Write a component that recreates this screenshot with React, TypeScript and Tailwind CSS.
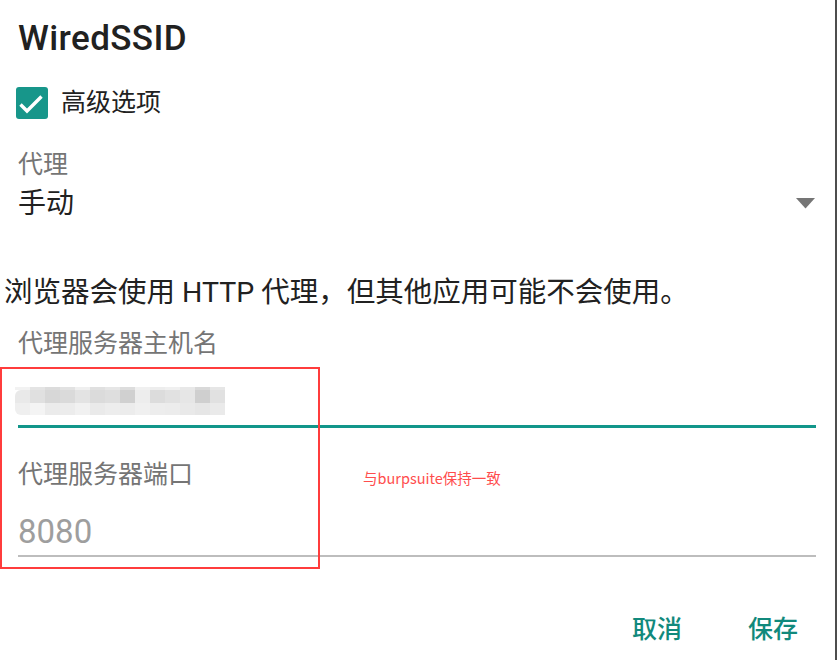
import React from "react";

const topRow = [
  "bg-[#f2f2f2]",
  "bg-[#e4e4e4]",
  "bg-[#dcdcdc]",
  "bg-[#e2e2e2]",
  "bg-[#efefef]",
  "bg-[#e0e0e0]",
  "bg-[#e6e6e6]",
  "bg-[#dddddd]",
  "bg-[#f0f0f0]",
  "bg-[#ededed]",
  "bg-[#f0f0f0]",
  "bg-[#e8e8e8]",
  "bg-[#d9d9d9]",
  "bg-[#e6e6e6]",
];
const row1 = [
  "bg-[#e9e9e9]",
  "bg-[#e0e0e0]",
  "bg-[#d7d7d7]",
  "bg-[#dadada]",
  "bg-[#e3e3e3]",
  "bg-[#dbdbdb]",
  "bg-[#dedede]",
  "bg-[#d0d0d0]",
  "bg-[#ededed]",
  "bg-[#dcdcdc]",
  "bg-[#e1e1e1]",
  "bg-[#e6e6e6]",
  "bg-[#cfcfcf]",
  "bg-[#e1e1e1]",
];
const row2 = [
  "bg-[#efefef]",
  "bg-[#f4f4f4]",
  "bg-[#ebebeb]",
  "bg-[#ececec]",
  "bg-[#f1f1f1]",
  "bg-[#eaeaea]",
  "bg-[#ededed]",
  "bg-[#ececec]",
  "bg-[#f0f0f0]",
  "bg-[#ededed]",
  "bg-[#ececec]",
  "bg-[#e9e9e9]",
  "bg-[#e6e6e6]",
  "bg-[#eaeaea]",
];

function Mosaic() {
  return (
    <div className="ml-[-3px] mt-[31px] flex flex-col">
      <div className="flex h-[3px]">
        {topRow.map((c, i) => (
          <div key={i} className={`w-[15px] ${c}`} />
        ))}
      </div>
      <div className="flex h-[13px]">
        {row1.map((c, i) => (
          <div key={i} className={`w-[15px] ${c} ${i === 0 ? "rounded-tl-[6px]" : ""}`} />
        ))}
      </div>
      <div className="flex h-[12px]">
        {row2.map((c, i) => (
          <div key={i} className={`w-[15px] ${c} ${i === 0 ? "rounded-bl-[6px]" : ""}`} />
        ))}
      </div>
    </div>
  );
}

export default function App() {
  return (
    <div className="relative flex h-[660px] w-[838px] overflow-hidden bg-white font-[Roboto,'Noto_Sans_CJK_SC',sans-serif]">
      <div className="flex w-[835px] flex-col pl-[18px] pr-[19px]">
        {/* Title */}
        <div className="pt-[21px] h-[57px] text-[35px] leading-[36px] font-medium tracking-[0.4px] text-[#212121]">
          WiredSSID
        </div>

        {/* Checkbox row */}
        <div className="mt-[30px] flex h-[32px] items-center">
          <div className="ml-[-2px] flex h-[32px] w-[32px] items-center justify-center rounded-[3px] bg-[#17968a]">
            <svg width="32" height="32" viewBox="0 0 32 32">
              <path
                d="M4.5 17.5 L11 24 L25.5 9.5"
                fill="none"
                stroke="white"
                strokeWidth="3.4"
              />
            </svg>
          </div>
          <span className="ml-[13px] text-[25px] leading-[32px] text-[#212121]">高级选项</span>
        </div>

        {/* Proxy label */}
        <div className="mt-[33px] h-[25px] text-[25px] leading-[25px] text-[#757575]">代理</div>

        {/* Dropdown row */}
        <div className="mt-[13px] flex h-[28px] items-center justify-between">
          <span className="text-[28px] leading-[28px] text-[#212121]">手动</span>
          <svg width="19" height="11" viewBox="0 0 19 11" className="mr-[1px] mb-[2px]">
            <polygon points="0,0 19,0 9.5,10.5" fill="#757575" />
          </svg>
        </div>

        {/* Info sentence */}
        <div className="ml-[-14px] mt-[61px] h-[28px] whitespace-nowrap text-[28.5px] leading-[28px] text-[#212121]">
          浏览器会使用 HTTP 代理，但其他应用可能不会使用。
        </div>

        {/* Hostname */}
        <div className="mt-[24px] h-[25px] text-[25px] leading-[25px] text-[#757575]">代理服务器主机名</div>
        <Mosaic />
        <div className="mt-[10px] h-[3px] bg-[#12968a]" />

        {/* Port */}
        <div className="mt-[34px] h-[25px] text-[25px] leading-[25px] text-[#757575]">代理服务器端口</div>
        <div className="mt-[28px] h-[33px] font-[Roboto,sans-serif] text-[33px] leading-[33px] text-[#9e9e9e]">
          8080
        </div>
        <div className="mt-[7px] h-[2px] bg-[#bdbdbd]" />

        {/* Buttons */}
        <div className="mt-[60px] flex h-[25px] justify-end">
          <span className="text-[25px] leading-[25px] font-medium text-[#11897c]">取消</span>
          <span className="ml-[66px] mr-[18px] text-[25px] leading-[25px] font-medium text-[#11897c]">保存</span>
        </div>
      </div>
      <div className="h-full w-[2px] bg-[#4d4d4d]" />
      <div className="h-full w-[1px] bg-white" />

      {/* Annotation overlay */}
      <div className="pointer-events-none absolute left-0 top-[367px] h-[202px] w-[320px] border-2 border-[#ff3c3c]" />
      <div className="absolute left-[363px] top-[471px] whitespace-nowrap font-['Noto_Sans_CJK_SC',sans-serif] text-[14.5px] leading-[14px] text-[#ff4d4d]">
        与burpsuite保持一致
      </div>
    </div>
  );
}
